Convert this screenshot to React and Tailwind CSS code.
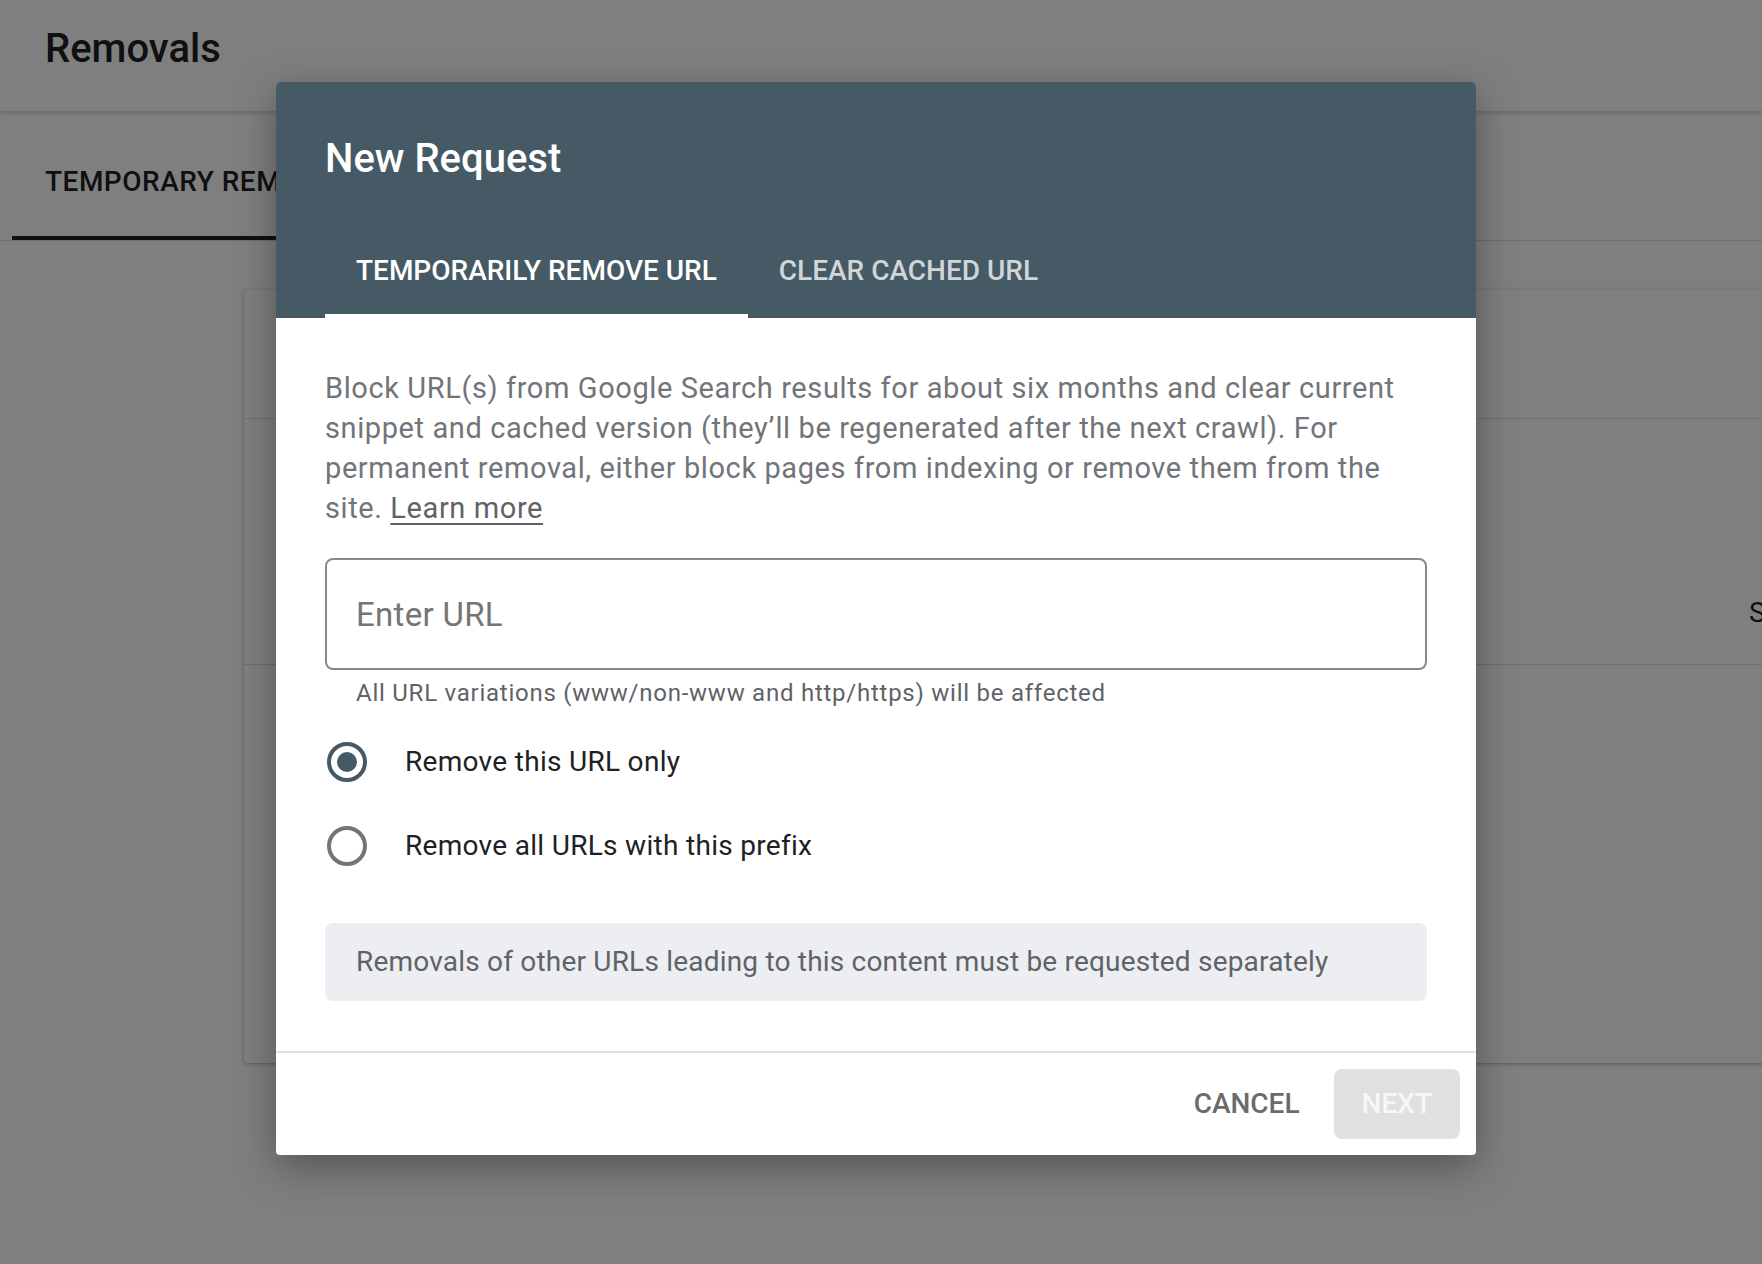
import React, { useState } from 'react';

const tabs = ['TEMPORARILY REMOVE URL', 'CLEAR CACHED URL'];

const Radio = ({ checked, label, onSelect }) => (
  <button onClick={onSelect} className="flex h-[56px] items-center text-left">
    <span
      className={`ml-[2px] flex h-[40px] w-[40px] items-center justify-center rounded-full border-4 ${
        checked ? 'border-[#455a64]' : 'border-[#757575]'
      }`}
    >
      {checked && <span className="h-[20px] w-[20px] rounded-full bg-[#455a64]" />}
    </span>
    <span className="ml-[38px] text-[28px] leading-[40px] tracking-[0.3px] text-[#202124]">{label}</span>
  </button>
);

const NewRequestDialog = () => {
  const [tab, setTab] = useState(0);
  const [mode, setMode] = useState('url');
  const [url, setUrl] = useState('');

  return (
    <div className="absolute left-[276px] top-[82px] z-30 w-[1200px] overflow-hidden rounded-[4px] bg-white shadow-[0_12px_40px_rgba(0,0,0,0.35)]">
      <div className="bg-[#455a64] px-[49px] pt-[49px]">
        <h2 className="text-[40px] leading-[56px] font-medium text-white">New Request</h2>
        <div className="mt-[35px] flex">
          {tabs.map((t, i) => (
            <button
              key={t}
              onClick={() => setTab(i)}
              className={`h-[96px] border-b-4 px-[31px] pt-[6px] text-[28px] font-medium tracking-[0px] ${
                tab === i ? 'border-white text-white' : 'border-transparent text-white/75'
              }`}
            >
              {t}
            </button>
          ))}
        </div>
      </div>

      <div className="px-[49px] pt-[50px] pb-[50px]">
        <p className="text-[29px] leading-[40px] tracking-[0.6px] text-[#717579]">
          Block URL(s) from Google Search results for about six months and clear current snippet and cached version
          (they’ll be regenerated after the next crawl). For permanent removal, either block pages from indexing or
          remove them from the site.{' '}
          <a href="#" className="text-[#5f6368] underline underline-offset-[5px]">
            Learn more
          </a>
        </p>

        <input
          value={url}
          onChange={(e) => setUrl(e.target.value)}
          placeholder="Enter URL"
          className="mt-[30px] h-[112px] w-full rounded-[8px] border-2 border-[#8a8a8a] px-[29px] text-[33px] tracking-[0.3px] text-[#202124] outline-none placeholder:text-[#757575]"
        />
        <div className="mt-[7px] pl-[31px] text-[24px] leading-[32px] tracking-[0.75px] text-[#5f6368]">
          All URL variations (www/non-www and http/https) will be affected
        </div>

        <div className="mt-[25px] flex flex-col gap-[28px]">
          <Radio checked={mode === 'url'} label="Remove this URL only" onSelect={() => setMode('url')} />
          <Radio checked={mode === 'prefix'} label="Remove all URLs with this prefix" onSelect={() => setMode('prefix')} />
        </div>

        <div className="mt-[49px] flex h-[78px] items-center rounded-[8px] bg-[#eceef1] pl-[31px] text-[28px] tracking-[0.2px] text-[#5f6368]">
          Removals of other URLs leading to this content must be requested separately
        </div>
      </div>

      <div className="flex h-[104px] items-center justify-end gap-[18px] border-t-2 border-[#e0e0e0] pr-[16px]">
        <button className="h-[70px] rounded-[8px] px-[16px] text-[28px] font-medium text-[#6b6b6b]">CANCEL</button>
        <button disabled className="h-[70px] rounded-[8px] bg-[#e0e0e0] px-[28px] text-[28px] font-medium text-[#f7f7f7]">
          NEXT
        </button>
      </div>
    </div>
  );
};

export default function App() {
  return (
    <div className="relative h-[1264px] w-full overflow-hidden bg-white font-['Roboto',sans-serif]">
      <header className="h-[112px] border-b border-[#dadce0] bg-white px-[45px] pt-[19px] shadow-[0_2px_4px_rgba(0,0,0,0.15)]">
        <h1 className="text-[40px] leading-[60px] font-medium text-[#202124]">Removals</h1>
      </header>

      <div className="flex h-[129px] border-b border-[#dadce0] pl-[12px]">
        <div className="h-[128px] border-b-4 border-[#202124] px-[33px] pt-[54px] text-[28px] leading-[32px] font-medium tracking-[0.5px] text-[#202124]">
          TEMPORARY REMOVALS
        </div>
      </div>

      <div className="pl-[244px] pt-[49px]">
        <div className="h-[773px] w-[1600px] rounded-[4px] bg-white shadow-[0_1px_4px_rgba(0,0,0,0.3)]">
          <div className="h-[129px] border-b border-[#dadce0]" />
          <div className="h-[246px] border-b border-[#dadce0] pl-[1505px] pt-[174px] text-[28px] leading-[40px] text-[#202124]">
            Status
          </div>
        </div>
      </div>

      <div className="absolute inset-0 z-20 bg-black/50" />
      <NewRequestDialog />
    </div>
  );
}
